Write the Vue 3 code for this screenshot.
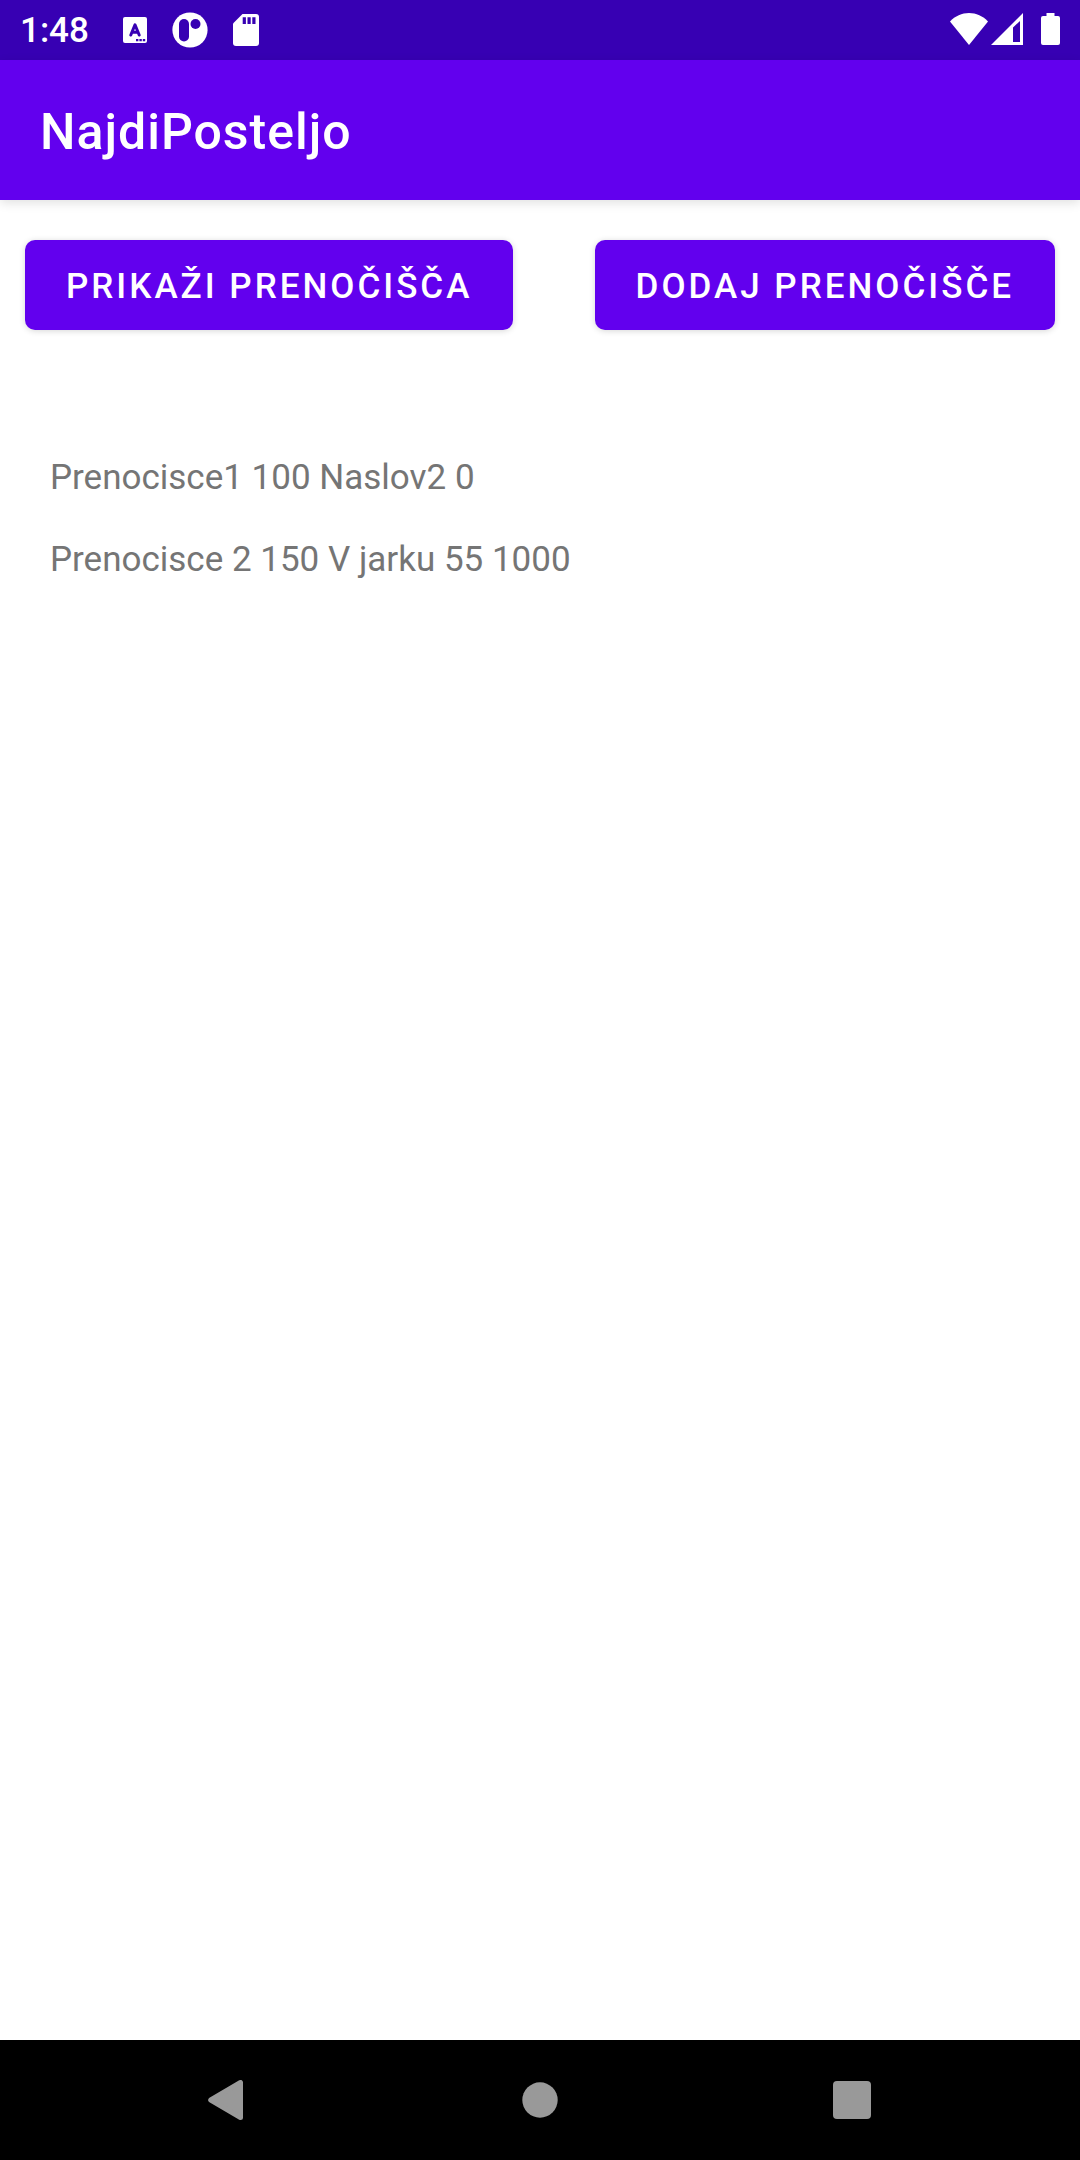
<script setup>
const stays = [
  { name: 'Prenocisce1', price: 100, address: 'Naslov2', distance: 0 },
  { name: 'Prenocisce 2', price: 150, address: 'V jarku 55', distance: 1000 },
]
</script>

<template>
  <div class="screen">
    <div class="status">
      <div class="status-left">
        <span class="clock">1:48</span>
        <svg class="icon-app" viewBox="0 0 24 26" width="24" height="26" aria-hidden="true">
          <rect width="24" height="26" rx="2" fill="#fff" />
          <path d="M7.800 18 12 7.800 16.200 18M9.500 15.300h5" fill="none" stroke="#3700b3" stroke-width="3" stroke-linecap="round" stroke-linejoin="round" />
          <path d="M13 22h2.400v2.200H13zM16.400 22h2.400v2.200h-2.400zM19.800 22h2.400v2.200h-2.400z" fill="#3700b3" />
        </svg>
        <svg class="icon-round" viewBox="0 0 36 36" width="36" height="36" aria-hidden="true">
          <circle cx="18" cy="18" r="17.600" fill="#fff" />
          <rect x="7" y="7" width="10" height="22.500" rx="5" fill="#3700b3" />
          <circle cx="23.500" cy="12" r="5" fill="#3700b3" />
        </svg>
        <svg class="icon-card" viewBox="0 0 26 32" width="26" height="32" aria-hidden="true">
          <path d="M9.500 0H23a3 3 0 0 1 3 3v26a3 3 0 0 1-3 3H3a3 3 0 0 1-3-3V9.500z" fill="#fff" />
          <path d="M9.700 3.300h3.200v6.800H9.700zM14.500 3.300h3.200v6.800h-3.200zM19.300 3.300h3.200v6.800h-3.200z" fill="#3700b3" />
        </svg>
      </div>
      <div class="status-right">
        <svg viewBox="0 0 38 32" width="38" height="32" aria-hidden="true">
          <path d="M19 32 0 8.500C5 3 12 0 19 0s14 3 19 8.500z" fill="#fff" />
        </svg>
        <svg class="icon-signal" viewBox="0 0 32 32" width="32" height="32" aria-hidden="true">
          <path fill-rule="evenodd" d="M32 0v32H0zM29 8l-7 6.500V29h7z" fill="#fff" />
        </svg>
        <svg class="icon-battery" viewBox="0 0 19 32" width="19" height="32" aria-hidden="true">
          <path d="M5.500 0h8v3H17a2 2 0 0 1 2 2v25a2 2 0 0 1-2 2H2a2 2 0 0 1-2-2V5a2 2 0 0 1 2-2h3.500z" fill="#fff" />
        </svg>
      </div>
    </div>

    <header class="app-bar">
      <h1>NajdiPosteljo</h1>
    </header>

    <main>
      <div class="actions">
        <button class="action" type="button">PRIKAŽI PRENOČIŠČA</button>
        <button class="action" type="button">DODAJ PRENOČIŠČE</button>
      </div>
      <ul class="stays">
        <li v-for="stay in stays" :key="stay.name">
          {{ stay.name }} {{ stay.price }} {{ stay.address }} {{ stay.distance }}
        </li>
      </ul>
    </main>

    <nav class="nav">
      <button type="button" aria-label="Nazaj">
        <svg viewBox="0 0 40 40" width="40" height="40">
          <path d="M32.500 2.500v35L2.700 20z" fill="#999" stroke="#999" stroke-width="5" stroke-linejoin="round" />
        </svg>
      </button>
      <button type="button" aria-label="Domov">
        <svg viewBox="0 0 40 40" width="40" height="40"><circle cx="20" cy="20" r="17.700" fill="#999" /></svg>
      </button>
      <button type="button" aria-label="Nedavno">
        <svg viewBox="0 0 40 40" width="40" height="40"><rect x="1" y="1" width="38" height="38" rx="4" fill="#999" /></svg>
      </button>
    </nav>
  </div>
</template>

<style>
body {
  margin: 0;
  background: #fff;
}
</style>

<style scoped>
.screen {
  display: flex;
  flex-direction: column;
  min-height: 100vh;
  font-family: Roboto, "Noto Sans", sans-serif;
  font-size: 35px;
  background: #fff;
}

svg {
  display: block;
  flex: none;
}

.status {
  display: flex;
  align-items: center;
  justify-content: space-between;
  height: 60px;
  padding: 0 20px;
  background: #3700b3;
  color: #fff;
}

.status-left,
.status-right {
  display: flex;
  align-items: center;
}

.status-right {
  padding-bottom: 2px;
}

.clock {
  padding-top: 2px;
  font-weight: 500;
  line-height: 58px;
}

.icon-app {
  margin-left: 34px;
}

.icon-round,
.icon-card {
  margin-left: 25px;
}

.icon-signal {
  margin-left: 3px;
}

.icon-battery {
  margin-left: 18px;
}

.app-bar {
  display: flex;
  align-items: center;
  box-sizing: border-box;
  height: 140px;
  padding: 4px 40px 0;
  background: #6200ee;
  color: #fff;
  box-shadow: 0 3px 10px rgba(0, 0, 0, 0.12);
}

h1 {
  margin: 0;
  font-size: 50px;
  font-weight: 500;
  line-height: 60px;
  letter-spacing: 1px;
}

main {
  flex: 1;
}

.actions {
  display: flex;
  flex-wrap: wrap;
  justify-content: space-between;
  gap: 20px;
  padding: 40px 25px;
}

.action {
  height: 90px;
  padding: 2px 41px 0;
  border: 0;
  border-radius: 10px;
  background: #6200ee;
  color: #fff;
  font: inherit;
  font-weight: 500;
  letter-spacing: 3px;
  box-shadow: 0 1px 6px rgba(0, 0, 0, 0.16);
}

.stays {
  display: flex;
  flex-direction: column;
  gap: 40px;
  margin: 0;
  padding: 87px 50px;
  list-style: none;
  color: #757575;
  line-height: 42px;
}

.nav {
  display: flex;
  justify-content: center;
  height: 120px;
  background: #000;
}

.nav button {
  display: flex;
  align-items: center;
  justify-content: center;
  width: 312px;
  padding: 0;
  border: 0;
  background: none;
}
</style>
